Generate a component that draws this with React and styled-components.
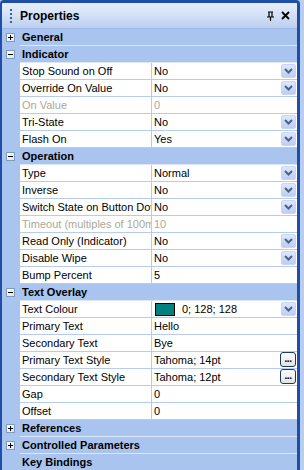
import React from 'react';
import styled, { createGlobalStyle } from 'styled-components';

const GlobalStyle = createGlobalStyle`
  html, body {
    margin: 0;
    padding: 0;
    background: #b9cdef;
  }
  body {
    font-family: "Liberation Sans", Arial, sans-serif;
    font-size: 11px;
    color: #000;
  }
`;

const Panel = styled.div`
  width: 295px;
  height: 470px;
  border: 3px solid #1f4ea8;
  border-left-width: 2px;
  border-bottom: none;
  border-radius: 4px 4px 0 0;
  background: #a9c4ee;
  overflow: hidden;
  display: flex;
  flex-direction: column;
`;

const TitleBar = styled.div`
  height: 25px;
  flex: none;
  display: flex;
  align-items: center;
  padding: 0 6px 0 8px;
  background: linear-gradient(#e7eefa 0%, #d5e2f7 45%, #bccff0 100%);
  border-bottom: 1px solid #9db7e6;
`;

const Gripper = styled.div`
  width: 2px;
  height: 14px;
  margin-right: 8px;
  background: repeating-linear-gradient(#3b5f9f 0 2px, transparent 2px 4px);
`;

const Title = styled.div`
  font-size: 12px;
  font-weight: bold;
  flex: 1;
`;

const TitleButton = styled.div`
  width: 11px;
  height: 11px;
  margin-left: 4px;
  display: flex;
  align-items: center;
  justify-content: center;
`;

const Grid = styled.div`
  display: flex;
  flex-direction: column;
`;

const Row = styled.div`
  display: flex;
  height: 16px;
  flex: none;
`;

const Gutter = styled.div`
  width: 18px;
  flex: none;
  display: flex;
  align-items: center;
  justify-content: center;
  padding-left: 1px;
  box-sizing: border-box;
  justify-content: flex-start;
  padding-left: 4px;
`;

const ToggleBox = styled.div`
  width: 9px;
  height: 9px;
  box-sizing: border-box;
  border: 1px solid #7f9db9;
  background: linear-gradient(135deg, #ffffff, #dbe3ee);
  position: relative;
  &::before {
    content: '';
    position: absolute;
    left: 1px;
    top: 3px;
    width: 5px;
    height: 1px;
    background: #000;
  }
  &::after {
    content: '';
    position: absolute;
    left: 3px;
    top: 1px;
    width: 1px;
    height: 5px;
    background: #000;
    display: ${({ $open }) => ($open ? 'none' : 'block')};
  }
`;

const CategoryCell = styled.div`
  flex: 1;
  height: 17px;
  box-sizing: border-box;
  border-bottom: 1px solid #dce7f8;
  padding-left: 2px;
  font-weight: bold;
  line-height: 16px;
  white-space: nowrap;
  overflow: hidden;
`;

const CategoryRow = styled(Row)`
  height: 17px;
`;

const PropRow = styled(Row)`
  height: 17px;
`;

const LabelCell = styled.div`
  width: 132px;
  flex: none;
  box-sizing: border-box;
  height: 17px;
  background: #fff;
  border-bottom: 1px solid #b7cbec;
  border-right: 1px solid #b7cbec;
  padding-left: 2px;
  line-height: 16px;
  white-space: nowrap;
  overflow: hidden;
  color: ${({ $disabled }) => ($disabled ? '#aca899' : '#000')};
`;

const ValueCell = styled.div`
  flex: 1;
  height: 17px;
  box-sizing: border-box;
  background: #fff;
  border-bottom: 1px solid #b7cbec;
  display: flex;
  align-items: flex-start;
  padding-left: 2px;
  padding-right: 1px;
  color: ${({ $disabled }) => ($disabled ? '#aca899' : '#000')};
`;

const ValueText = styled.span`
  flex: 1;
  line-height: 16px;
  white-space: nowrap;
  overflow: hidden;
`;

const DropButton = styled.div`
  width: 15px;
  height: 14px;
  margin-top: 1px;
  box-sizing: border-box;
  border-radius: 2px;
  background: linear-gradient(#dde8fb, #bccdf5);
  border: 1px solid #c7d6f5;
  display: flex;
  align-items: center;
  justify-content: center;
`;

const EllipsisButton = styled.div`
  width: 16px;
  height: 15px;
  margin-top: 0;
  box-sizing: border-box;
  border: 1px solid #1c3a6a;
  border-radius: 3px;
  background: linear-gradient(#ffffff, #e3e3dc);
  font-weight: bold;
  font-size: 10px;
  line-height: 12px;
  text-align: center;
  letter-spacing: -0.5px;
`;

const Swatch = styled.div`
  width: 18px;
  height: 11px;
  margin: 2px 7px 0 1px;
  flex: none;
  border: 1px solid #000;
  background: rgb(0, 128, 128);
`;

const Chevron = () => (
  <svg width="9" height="6" viewBox="0 0 9 6">
    <path d="M1 1 L4.5 4.5 L8 1" fill="none" stroke="#4d6185" strokeWidth="2" />
  </svg>
);

const Category = ({ name, open, toggle = true }) => (
  <CategoryRow>
    <Gutter>{toggle && <ToggleBox $open={open} />}</Gutter>
    <CategoryCell>{name}</CategoryCell>
  </CategoryRow>
);

const Prop = ({ label, value, kind, disabled, swatch }) => (
  <PropRow>
    <Gutter />
    <LabelCell $disabled={disabled}>{label}</LabelCell>
    <ValueCell $disabled={disabled}>
      {swatch && <Swatch />}
      <ValueText>{value}</ValueText>
      {kind === 'drop' && (
        <DropButton>
          <Chevron />
        </DropButton>
      )}
      {kind === 'dots' && <EllipsisButton>...</EllipsisButton>}
    </ValueCell>
  </PropRow>
);

export default function App() {
  return (
    <>
      <GlobalStyle />
      <Panel>
        <TitleBar>
          <Gripper />
          <Title>Properties</Title>
          <TitleButton>
            <svg width="9" height="10" viewBox="0 0 9 10">
              <path d="M2 1 H7 M3 1 V6 M6 1 V6 M1 6 H8 M4.5 6 V10" stroke="#000" strokeWidth="1.2" fill="none" />
            </svg>
          </TitleButton>
          <TitleButton>
            <svg width="9" height="9" viewBox="0 0 9 9">
              <path d="M1 1 L8 8 M8 1 L1 8" stroke="#000" strokeWidth="1.8" />
            </svg>
          </TitleButton>
        </TitleBar>
        <Grid>
          <Category name="General" />
          <Category name="Indicator" open />
          <Prop label="Stop Sound on Off" value="No" kind="drop" />
          <Prop label="Override On Value" value="No" kind="drop" />
          <Prop label="On Value" value="0" disabled />
          <Prop label="Tri-State" value="No" kind="drop" />
          <Prop label="Flash On" value="Yes" kind="drop" />
          <Category name="Operation" open />
          <Prop label="Type" value="Normal" kind="drop" />
          <Prop label="Inverse" value="No" kind="drop" />
          <Prop label="Switch State on Button Down" value="No" kind="drop" />
          <Prop label="Timeout (multiples of 100ms)" value="10" disabled />
          <Prop label="Read Only (Indicator)" value="No" kind="drop" />
          <Prop label="Disable Wipe" value="No" kind="drop" />
          <Prop label="Bump Percent" value="5" />
          <Category name="Text Overlay" open />
          <Prop label="Text Colour" value="0; 128; 128" kind="drop" swatch />
          <Prop label="Primary Text" value="Hello" />
          <Prop label="Secondary Text" value="Bye" />
          <Prop label="Primary Text Style" value="Tahoma; 14pt" kind="dots" />
          <Prop label="Secondary Text Style" value="Tahoma; 12pt" kind="dots" />
          <Prop label="Gap" value="0" />
          <Prop label="Offset" value="0" />
          <Category name="References" />
          <Category name="Controlled Parameters" />
          <Category name="Key Bindings" toggle={false} />
        </Grid>
      </Panel>
    </>
  );
}
